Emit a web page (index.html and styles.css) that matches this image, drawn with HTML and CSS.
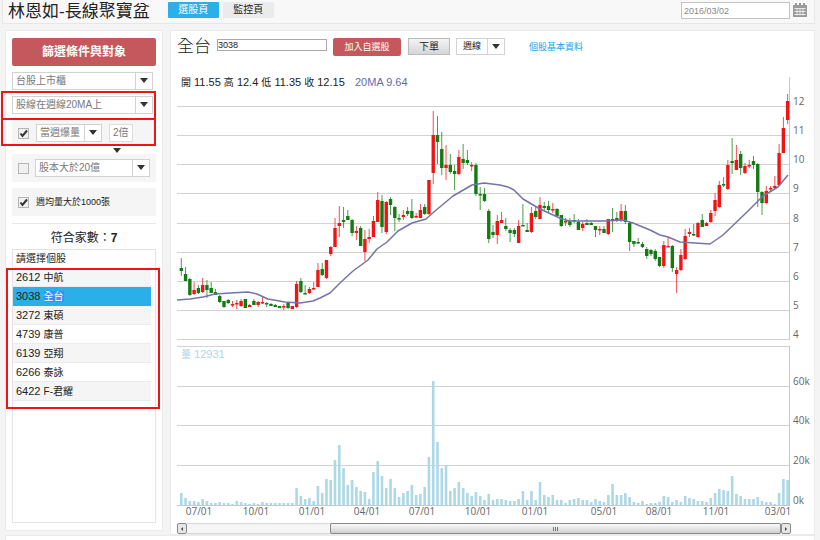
FILE: index.html
```html
<!DOCTYPE html>
<html lang="zh-Hant">
<head>
<meta charset="utf-8">
<title>林恩如-長線聚寶盆</title>
<link rel="stylesheet" href="styles.css">
</head>
<body>
<header class="topbar">
  <h1>林恩如-長線聚寶盆</h1>
  <nav class="tabs">
    <button class="tab active" type="button">選股頁</button>
    <button class="tab" type="button">監控頁</button>
  </nav>
  <div class="date">
    <input type="text" value="2016/03/02" aria-label="日期">
    <button type="button" aria-label="月曆">
      <svg viewBox="0 0 16 16" width="16" height="16"><path fill="#9a9a9a" d="M1 3h2V1h2v2h2V1h2v2h2V1h2v2h2v12H1z"/><path stroke="#f7f7f7" fill="none" stroke-width=".8" d="M2.500 6.500h11M2.500 9.500h11M2.500 12.500h11M5 6v7.500M8 6v7.500M11 6v7.500"/></svg>
    </button>
  </div>
</header>

<div class="layout">
  <aside class="panel sidebar">
    <button class="primary filter-title" type="button">篩選條件與對象</button>
    <div class="field"><div class="dropdown"><select aria-label="市場"><option>台股上市櫃</option></select></div></div>
    <div class="field marked"><div class="dropdown"><select aria-label="均線條件"><option>股線在週線20MA上</option></select></div></div>
    <div class="rule volume-rule marked">
      <input type="checkbox" checked aria-label="當週爆量">
      <div class="dropdown burst"><select aria-label="爆量條件"><option>當週爆量</option></select></div>
      <div class="times"><select aria-label="倍數"><option>2倍</option></select></div>
    </div>
    <div class="rule capital-rule">
      <input type="checkbox" aria-label="股本">
      <div class="dropdown capital"><select aria-label="股本條件"><option>股本大於20億</option></select></div>
    </div>
    <label class="rule average-rule"><input type="checkbox" checked><span>週均量大於1000張</span></label>
    <p class="count">符合家數：<b>7</b></p>
    <div class="stocks">
      <p>請選擇個股</p>
      <ul class="marked">
        <li><button type="button">2612 <span>中航</span></button></li>
        <li><button type="button" class="current">3038 <mark>全台</mark></button></li>
        <li><button type="button">3272 <span>東碩</span></button></li>
        <li><button type="button">4739 <span>康普</span></button></li>
        <li><button type="button">6139 <span>亞翔</span></button></li>
        <li><button type="button">6266 <span>泰詠</span></button></li>
        <li><button type="button">6422 <span>F-君耀</span></button></li>
      </ul>
    </div>
  </aside>

  <main class="panel content">
    <div class="toolbar">
      <h2>全台</h2>
      <input class="code" type="text" value="3038" aria-label="股票代號">
      <button class="primary add" type="button">加入自選股</button>
      <button class="order" type="button">下單</button>
      <div class="dropdown period"><select aria-label="週期"><option>週線</option></select></div>
      <a href="#info">個股基本資料</a>
    </div>
    <svg id="chart" class="chart" viewBox="177 71 637 452" role="img" aria-label="全台 週線圖">
      <g id="grid"></g>
      <g id="volume"></g>
      <g id="candles"></g>
      <polyline id="average" class="average"/>
      <g id="labels"></g>
      <text class="legend" x="181" y="86"><tspan class="key">開</tspan> 11.55 <tspan class="key">高</tspan> 12.4 <tspan class="key">低</tspan> 11.35 <tspan class="key">收</tspan> 12.15</text>
      <text class="legend ma" x="355" y="86">20MA 9.64</text>
      <text class="legend vol" x="181" y="358"><tspan class="key">量</tspan> 12931</text>
    </svg>
    <div class="scroller">
      <button type="button" aria-label="向左"><svg viewBox="0 0 4 4" width="4" height="4"><path d="M3 0v4L1 2z" fill="#444"/></svg></button>
      <div class="track"><div class="thumb"><i></i><i></i><i></i></div></div>
      <button type="button" aria-label="向右"><svg viewBox="0 0 4 4" width="4" height="4"><path d="M1 0v4l2-2z" fill="#444"/></svg></button>
    </div>
  </main>
</div>
<div class="panel next"></div>
<script src="chart.js"></script>
</body>
</html>
```
FILE: styles.css
```css
* { box-sizing: border-box; }
body {
  margin: 0;
  background: #f4f4f4;
  color: #222;
  font: 11px/16px "Liberation Sans", "Noto Sans CJK TC", sans-serif;
  overflow: hidden;
}
h1, h2, p, ul { margin: 0; padding: 0; font-weight: 400; }
button, input, select { font: inherit; color: inherit; margin: 0; padding: 0; border-radius: 0; }
button { border: 0; background: none; }

.topbar {
  display: flex;
  height: 24px;
  margin: 0 5px 0 2px;
  padding-left: 5px;
  background: #f8f8f8;
  border: solid #e6e6e6;
  border-width: 0 1px 1px;
}
h1 { font-size: 17px; line-height: 24px; white-space: nowrap; }
.tabs { display: flex; gap: 4px; margin: 2px 0 0 18px; }
.tab { height: 16px; width: 51px; border-radius: 1px; background: #ebebeb; font-size: 10px; line-height: 16px; }
.tab.active { background: #2bafe8; color: #fff; }
.date { display: flex; gap: 2px; margin: 2px 6px 0 auto; }
.date input { width: 109px; height: 17px; padding: 0 2px; border: 1px solid #c4c4c4; background: #fff; color: #888; font-size: 9px; }
.date button { width: 16px; height: 16px; line-height: 0; }

.layout { display: flex; gap: 7px; margin: 6px 5px 0; align-items: flex-start; }
.panel { background: #fff; border: 1px solid #ebebeb; }
.sidebar { flex: 0 0 158px; padding: 7px 6px; }
.content { flex: 1; min-width: 0; padding: 7px 0 0 6px; }
.next { margin: 0 5px; height: 20px; }

.primary { background: #c4585d; color: #fff; border-radius: 2px; }
.filter-title { display: block; width: 100%; height: 28px; font-size: 12px; font-weight: 700; margin-bottom: 3px; }

.marked { position: relative; }
.marked::after { content: ""; position: absolute; border: 2px solid #f01414; pointer-events: none; z-index: 1; }
.field { padding: 3px 3px 3px 0; }
.field.marked::after { inset: -2px 0 -3px -11px; }
.dropdown { position: relative; height: 18px; border: 1px solid #d2d2d2; background: #fff; }
.dropdown::before, .dropdown::after { content: ""; position: absolute; pointer-events: none; }
.dropdown::before { right: 16px; top: 0; bottom: 0; border-left: 1px solid #d2d2d2; }
.dropdown::after, .times::after { border: 4px solid transparent; border-top: 5px solid #333; border-bottom: 0; }
.dropdown::after { right: 4px; top: 5px; }
select { appearance: none; display: block; width: 100%; height: 16px; border: 0; background: transparent; color: #777; padding-left: 3px; font-size: 10px; line-height: 16px; }

.rule { display: flex; align-items: center; background: #f5f5f5; height: 28px; padding-left: 6px; }
.rule input { width: 11px; height: 11px; appearance: none; border: 1px solid #b5b5b5; background: #f0f0f0; flex: none; }
.rule input:checked { background: #f0f0f0 url("data:image/svg+xml,%3Csvg xmlns='http://www.w3.org/2000/svg' viewBox='0 0 9 9'%3E%3Cpath d='M1.500 4.500l2 2.500L8 1.500' fill='none' stroke='%23333' stroke-width='2'/%3E%3C/svg%3E"); }
.volume-rule { margin: 1px 0 8px; padding-top: 2px; }
.volume-rule.marked::after { inset: 0 0 0 -11px; }
.burst { width: 66px; margin-left: 7px; }
.times { position: relative; width: 24px; height: 18px; margin-left: 7px; border: 1px solid #ddd; background: #fff; }
.times::after { content: ""; position: absolute; left: 3px; top: 23px; z-index: 2; }
.capital-rule { margin-bottom: 6px; }
.capital { width: 115px; margin-left: 6px; }
.average-rule { margin-bottom: 7px; gap: 7px; font-size: 9px; }
.count { border-top: 1px solid #e8e8e8; padding-top: 4px; height: 26px; text-align: center; font-size: 12px; line-height: 20px; }

.stocks { height: 274px; border: 1px solid #e3e3e3; }
.stocks p { padding-left: 3px; height: 18px; line-height: 18px; font-size: 10px; }
.stocks ul { list-style: none; margin-right: 4px; }
.stocks ul::after { inset: 0 -9px -8px -7px; }
.stocks button { display: block; width: 100%; height: 19px; padding-left: 3px; border-bottom: 1px solid #ebebeb; text-align: left; line-height: 18px; }
.stocks li:nth-child(odd) button { background: #f5f5f5; }
.stocks .current { background: #2bafe8; border-color: #2bafe8; }
.stocks span, mark { font-size: 10px; }
mark { background: #3390ff; color: #fff; }

.toolbar { display: flex; align-items: flex-start; height: 33px; }
h2 { width: 40px; font-size: 17px; font-weight: 300; line-height: 18px; }
.code { width: 110px; height: 12px; margin-top: 1px; border: 1px solid #aaa; font-size: 9px; }
.add { width: 68px; height: 18px; margin-left: 6px; font-size: 9px; }
.order { width: 42px; height: 17px; margin-left: 7px; border: 1px solid #bbb; background: linear-gradient(#f4f4f4, #d5d5d5); font-size: 10px; line-height: 15px; }
.period { width: 49px; height: 17px; margin-left: 6px; }
.period select { height: 15px; padding-left: 6px; font-size: 9px; color: #222; line-height: 15px; }
.toolbar a { margin: 1px 0 0 24px; color: #1ba5e2; font-size: 9px; text-decoration: none; }

.chart { display: block; width: 100%; height: auto; }
.grid-line { stroke: #d2d2d2; stroke-width: 1; }
.axis { stroke: #c0c8da; stroke-width: 1; }
.average { fill: none; stroke: #7474a8; stroke-width: 1.500; stroke-linejoin: round; }
.up { fill: #f01414; }
.down { fill: #127c12; }
.wick { opacity: .75; }
.bar { fill: #add8e6; }
.tick { font: 10px "Open Sans", sans-serif; fill: #666; }
.legend { font-size: 11px; fill: #222; }
.key { font-size: 10px; }
.ma { fill: #6a6aa8; }
.vol { fill: #add8e6; }

.scroller { display: flex; height: 11px; margin-right: 23px; }
.scroller button { display: flex; width: 10px; align-items: center; justify-content: center; border: 1px solid #888; border-radius: 2px; background: #e6e6e6; }
.track { flex: 1; border: solid #d8d8d8; border-width: 1px 0; background: #f5f5f5; }
.thumb { display: flex; justify-content: center; align-items: center; gap: 1px; width: 76%; height: 11px; margin: -1px 0 0 auto; border: 1px solid #888; border-radius: 2px; background: linear-gradient(#fafafa, #cfcfcf); }
.thumb i { width: 1px; height: 4px; background: #777; }
```
FILE: chart.js
```js
// Weekly candles: direction, body top, body bottom, wick top, wick bottom (chart units)
const candles = `g268,271,258,276 g274,281,267,281 g279,295,278,296 r290,294,282,295 g288,293,285,294 r285,292,278,293 g285,290,280,298 g288,293,282,293 g292,295,289,295 g296,302,295,303
g301,307,301,308 g300,303,299,304 r304,305,301,307 r303,304,300,309 r301,306,299,307 g299,308,299,308 r305,307,304,307 g301,305,299,305 r302,305,301,307 r302,303,297,304
g303,304,302,307 g304,306,303,306 g305,307,304,307 g306,308,306,308 r306,307,304,310 g303,308,303,309 r306,309,306,309 r284,307,281,308 g281,292,278,293 g293,294,285,294
r289,293,287,294 r288,289,282,290 r270,287,263,287 g269,275,263,276 r260,278,260,279 r247,254,246,256 r228,247,218,247 r223,226,206,237 g220,222,207,228 g216,220,210,220
g220,233,219,236 r231,233,226,240 g228,246,226,246 r239,252,230,261 r237,239,229,243 r221,237,216,237 r200,222,192,222 g201,227,195,233 r202,232,201,234 g199,205,197,215
g207,218,206,231 g218,219,214,222 r215,217,210,220 g211,214,207,216 g211,218,199,219 r216,217,213,218 r210,218,204,218 g207,214,204,215 r180,214,180,215 r135,173,111,184
g135,142,116,164 g149,168,132,175 r165,168,145,180 g165,172,154,174 g171,174,165,190 r157,174,150,175 g159,163,144,169 g160,163,150,165 r165,166,162,171 g165,194,163,196
g194,195,187,210 g194,201,188,202 g211,239,209,243 g232,235,225,238 r221,235,215,244 r220,223,212,223 g226,229,218,231 g230,233,228,242 g230,234,228,237 r226,243,220,243
g225,226,204,226 g230,232,223,232 r213,232,207,233 g211,217,207,219 r205,219,197,219 g206,208,202,211 g206,210,201,212 r209,210,203,213 g209,216,208,216 g215,226,215,227
r221,222,218,226 g221,225,218,227 g220,221,214,223 g222,230,219,230 r224,228,222,231 g223,225,219,225 g223,225,222,225 g226,230,226,237 r229,230,226,235 g229,233,226,233
r219,234,219,235 g219,220,208,232 g218,220,212,222 r211,220,204,222 g211,222,205,224 g223,242,221,251 g241,244,241,247 g242,243,238,244 g244,247,242,248 g249,256,247,259
g250,254,249,256 g251,259,249,261 g257,266,257,267 r245,266,241,268 r246,247,237,247 g246,268,245,272 r270,274,267,293 r255,270,249,271 r236,259,229,260 r232,234,228,237
g234,235,224,236 r223,237,222,238 g220,227,214,227 r223,226,222,226 r213,222,210,223 r200,211,193,216 r185,207,181,208 g184,185,177,187 r165,189,160,190 g161,163,138,174
r160,170,145,170 g154,168,151,175 r166,173,163,174 r165,166,160,168 g161,165,156,169 g164,192,163,207 g192,203,191,215 r191,203,186,204 r188,189,186,191 r186,188,176,189
r153,185,144,186 r128,153,117,153 r101,120,94,124`.split(/\s+/);

const volumes = [12,7,4,4,3,6,4,2,2,3,2,2,1,4,3,2,1,2,1,3,2,2,2,2,2,2,2,17,9,6,
  7,4,19,12,26,25,45,60,37,20,25,18,14,13,6,33,44,29,17,26,17,8,12,14,20,10,11,18,48,124,
  63,37,40,14,17,23,17,12,9,13,9,5,11,5,6,6,5,4,4,6,14,5,14,5,23,10,8,10,5,5,
  2,5,6,7,5,5,3,6,4,3,10,21,10,10,12,8,3,2,4,1,2,2,3,9,8,3,5,3,9,7,
  6,4,4,3,7,12,16,15,14,29,11,9,6,6,6,8,4,3,3,1,12,26,25];

const average = [177,300,190,299,203,297,215,294,230,293,248,292,257,294,268,299,285,302,300,303,313,301,320,298,330,293,340,283,353,271,368,260,377,249,387,242,398,231,412,223,426,219,435,211,453,196,472,185,484,183,500,185,508,187,514,190,523,199,540,209,562,219,570,221,605,221,623,220,633,223,650,230,660,235,668,237,680,242,710,244,723,235,747,212,763,196,778,187,788,175];

function add(parent, tag, attrs, text) {
  const node = document.createElementNS("http://www.w3.org/2000/svg", tag);
  for (const key in attrs) node.setAttribute(key, attrs[key]);
  if (text) node.textContent = text;
  document.getElementById(parent).appendChild(node);
}
function line(x1, y1, x2, y2, cls) { add("grid", "line", { x1, y1, x2, y2, class: cls }); }

const first = 181.3, step = 4.27;
for (let i = 0; i < 9; i++) {
  const y = Math.round(106 + i * 29.15) + 0.5;
  line(177, y, 789, y, "grid-line");
  add("labels", "text", { x: 793, y: y - 2, class: "tick" }, String(12 - i));
}
[[386.5, "60k"], [425.5, "40k"], [465.5, "20k"], [505.5, "0k"]].forEach(([y, text]) => {
  line(177, y, 789, y, y > 500 ? "axis" : "grid-line");
  add("labels", "text", { x: 793, y: y - 2, class: "tick" }, text);
});
line(177, 346.5, 789, 346.5, "grid-line");
line(789.5, 77, 789.5, 340, "axis");
line(789.5, 346, 789.5, 506, "axis");
[[199, "07/01"], [256, "10/01"], [312, "01/01"], [367, "04/01"], [422, "07/01"], [478, "10/01"],
 [535, "01/01"], [604, "05/01"], [659, "08/01"], [716, "11/01"], [778, "03/01"]].forEach(([x, text]) =>
  add("labels", "text", { x, y: 515, class: "tick", "text-anchor": "middle" }, text));

candles.forEach((entry, i) => {
  const cls = entry[0] === "r" ? "up" : "down";
  const [top, bottom, high, low] = entry.slice(1).split(",").map(Number);
  const x = first + i * step;
  add("candles", "rect", { x: x - 0.5, y: high, width: 1, height: low - high, class: cls + " wick" });
  add("candles", "rect", { x: x - 1.7, y: top, width: 3.4, height: Math.max(bottom - top, 1.5), class: cls });
});
volumes.forEach((height, i) =>
  add("volume", "rect", { x: first + i * step - 1.3, y: 505 - height, width: 2.6, height, class: "bar" }));
document.getElementById("average").setAttribute("points", average.join(" "));
```
